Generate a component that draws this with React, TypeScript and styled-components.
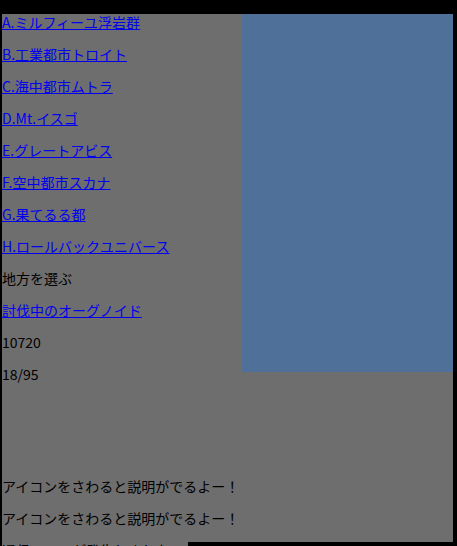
import React from "react";
import styled, { createGlobalStyle } from "styled-components";

const Global = createGlobalStyle`
  html {
    background: #000;
  }
  body {
    margin: 0;
    padding: 0;
    background: #000;
    font-family: "Noto Sans CJK JP", "DejaVu Sans", sans-serif;
    font-size: 14px;
  }
`;

const Page = styled.div`
  padding: 14px 4px 0 2px;
  height: 546px;
  box-sizing: border-box;
  overflow: hidden;
`;

const Panel = styled.div`
  height: 528px;
  background: #6e6e6e;
  color: #000;
`;

const Banner = styled.div`
  float: right;
  width: 211px;
  height: 358px;
  background: #4f7099;
`;

const Line = styled.div`
  line-height: 16px;
  margin-bottom: 16px;
  white-space: nowrap;
`;

const Link = styled.a`
  color: #0000ee;
  text-decoration: underline;
  cursor: pointer;
`;

const Spacer = styled.div`
  height: 64px;
  margin-bottom: 16px;
`;

const ErrorLine = styled.div`
  width: fit-content;
  line-height: 16px;
  background: #6e6e6e;
  color: #000;
  padding-right: 18px;
  white-space: nowrap;
`;

const areas = [
  "A.ミルフィーユ浮岩群",
  "B.工業都市トロイト",
  "C.海中都市ムトラ",
  "D.Mt.イスゴ",
  "E.グレートアビス",
  "F.空中都市スカナ",
  "G.果てるる都",
  "H.ロールバックユニバース",
];

export default function App() {
  return (
    <>
      <Global />
      <Page>
        <Panel>
          <Banner />
          {areas.map((a) => (
            <Line key={a}>
              <Link href="#">{a}</Link>
            </Line>
          ))}
          <Line>地方を選ぶ</Line>
          <Line>
            <Link href="#">討伐中のオーグノイド</Link>
          </Line>
          <Line>10720</Line>
          <Line>18/95</Line>
          <Spacer />
          <Line>アイコンをさわると説明がでるよー！</Line>
          <Line>アイコンをさわると説明がでるよー！</Line>
        </Panel>
        <ErrorLine>通信エラーが発生しました</ErrorLine>
      </Page>
    </>
  );
}
